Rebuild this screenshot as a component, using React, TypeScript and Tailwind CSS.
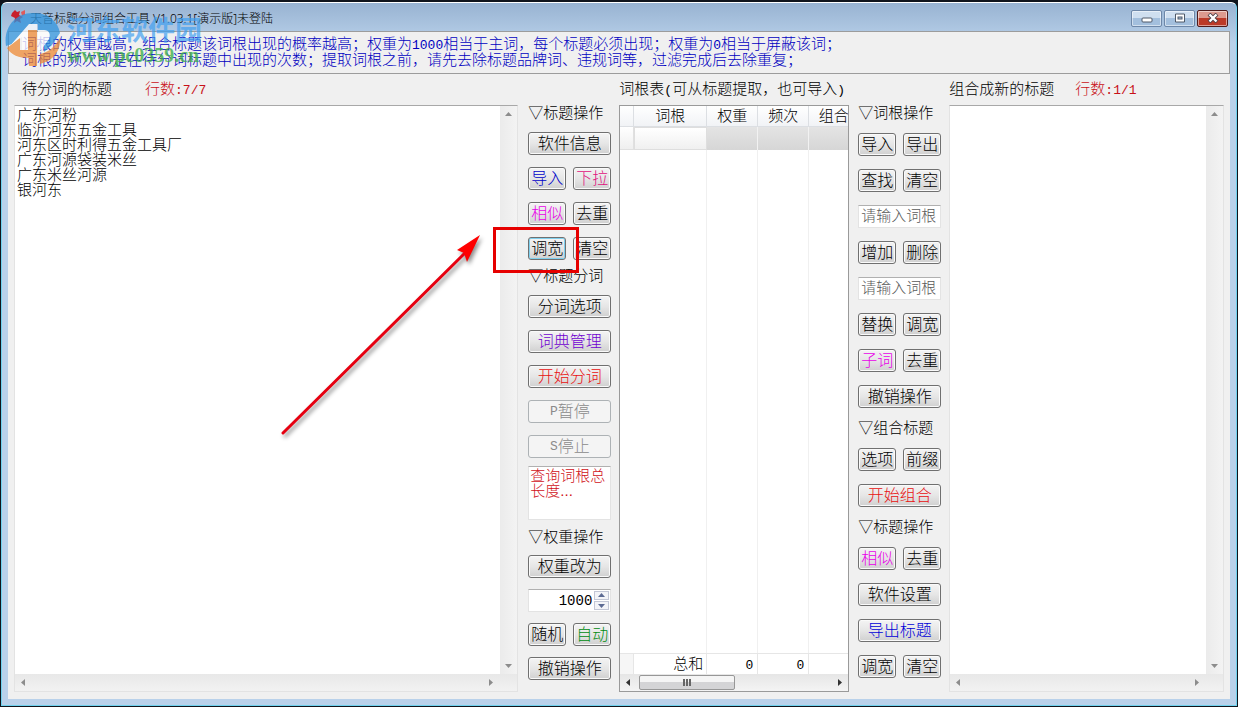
import { ReactNode } from "react";

const font = "font-['Liberation_Sans','Noto_Sans_CJK_SC',sans-serif] font-light";

function Num({ children }: { children: ReactNode }) {
  return <span className="font-['Liberation_Mono',monospace] text-[13px] leading-none">{children}</span>;
}

function Btn({ children, className = "text-black", disabled = false }: { children: ReactNode; className?: string; disabled?: boolean }) {
  return (
    <button
      type="button"
      disabled={disabled}
      className={`flex h-[23px] w-full items-center justify-center overflow-hidden rounded-[3px] border text-base leading-none whitespace-nowrap ${
        disabled
          ? "border-[#adb2b5] bg-[#f4f4f4] text-[#8a8a8a]"
          : `border-[#707070] bg-linear-to-b from-[#f4f4f4] from-0% via-[#e6e6e6] via-50% to-[#d0d0d0] shadow-[inset_0_0_0_1px_#fafafa] ${className}`
      }`}
    >
      {children}
    </button>
  );
}

function Pair({ children }: { children: ReactNode }) {
  return <div className="grid grid-cols-2 gap-[7px]">{children}</div>;
}

function Label({ children }: { children: ReactNode }) {
  return <h2 className="h-[15px] text-[15px] leading-[15px] whitespace-nowrap">▽{children}</h2>;
}

function Arrow({ dir, className = "text-[#8c8c8c]" }: { dir: "up" | "down" | "left" | "right"; className?: string }) {
  const d = {
    up: "M1 6L4.500 2L8 6Z",
    down: "M1 3L4.500 7L8 3Z",
    left: "M6 1L2 4.500L6 8Z",
    right: "M3 1L7 4.500L3 8Z",
  }[dir];
  return (
    <svg viewBox="0 0 9 9" className={`size-[9px] shrink-0 ${className}`} aria-hidden="true">
      <path d={d} fill="currentColor" />
    </svg>
  );
}

function ListPanel({ label, value }: { label: string; value: string }) {
  return (
    <div className="flex min-h-0 flex-1 flex-col border border-[#e3e3e3] border-t-[#a8a8a8] bg-[#f0f0f0]">
      <div className="flex min-h-0 flex-1">
        <textarea
          aria-label={label}
          defaultValue={value}
          spellCheck={false}
          className="min-w-0 flex-1 resize-none overflow-hidden bg-white px-0.5 pt-px text-[15px] leading-[15px] outline-none"
        />
        <div className="flex w-[17px] flex-col items-center justify-between bg-linear-to-r from-[#ebebeb] to-[#f3f3f3] py-1">
          <Arrow dir="up" />
          <Arrow dir="down" />
        </div>
      </div>
      <div className="flex h-[17px] items-center justify-between bg-linear-to-b from-[#e8e8e8] to-[#f2f2f2] pr-[22px] pl-1">
        <Arrow dir="left" />
        <Arrow dir="right" />
      </div>
    </div>
  );
}

function TitleBar() {
  const box = "flex h-[17px] w-[31px] items-center justify-center rounded-[2px] border shadow-[inset_0_0_0_1px_rgba(255,255,255,0.5)]";
  return (
    <header className="flex h-7 shrink-0 items-center pr-[2px] pl-[3px]">
      <svg viewBox="0 0 16 16" className="size-4" aria-hidden="true">
        <path d="M1 4L4 1L6 3L9 2L8 6L12 8L9 10L10 14L6 12L3 14L4 9L0 7Z" fill="#c9202c" />
        <path d="M10 3L14 1V6L11 7Z" fill="#e05a5a" />
      </svg>
      <h1 className="ml-[3px] flex-1 pt-1 font-['Noto_Sans','Noto_Sans_CJK_SC',sans-serif] text-xs leading-4 text-black">
        天音标题分词组合工具 V1.03.1[演示版]未登陆
      </h1>
      <div className="flex gap-[2px] pt-[2px]">
        <button type="button" aria-label="最小化" className={`${box} border-[#6d87a8] bg-linear-to-b from-[#cfdff0] from-45% to-[#a3bfdd] to-50%`}>
          <svg viewBox="0 0 12 10" className="h-[10px] w-3"><rect x="1" y="5" width="10" height="4" rx="1" fill="#fff" stroke="#4e5968" /></svg>
        </button>
        <button type="button" aria-label="最大化" className={`${box} border-[#6d87a8] bg-linear-to-b from-[#cfdff0] from-45% to-[#a3bfdd] to-50%`}>
          <svg viewBox="0 0 12 10" className="h-[10px] w-3"><path d="M1.500 1h9v8h-9Z" fill="#fff" stroke="#4e5968" /><rect x="4" y="4" width="4" height="2" fill="#a9c2dd" stroke="#4e5968" /></svg>
        </button>
        <button type="button" aria-label="关闭" className={`${box} border-[#4f1b1b] bg-linear-to-b from-[#dd9a8f] from-45% to-[#bb3a28] to-50%`}>
          <svg viewBox="0 0 12 10" className="h-[10px] w-3"><path d="M2 1L10 9M10 1L2 9" stroke="#4e4048" strokeWidth="4" /><path d="M2.500 1.500L9.500 8.500M9.500 1.500L2.500 8.500" stroke="#fff" strokeWidth="2.400" /></svg>
        </button>
      </div>
    </header>
  );
}

function RootTable() {
  const line = "border-r border-[#e6e6e6]";
  return (
    <div className="flex min-h-0 flex-1 flex-col overflow-hidden border border-[#9a9a9a] bg-white">
      <div className="flex min-h-0 flex-1 overflow-hidden">
        <table className="h-full w-[239px] shrink-0 table-fixed border-separate border-spacing-0 text-[15px] leading-[15px]">
          <colgroup>
            <col className="w-[14px]" />
            <col className="w-[73px]" />
            <col className="w-[51px]" />
            <col className="w-[51px]" />
            <col className="w-[50px]" />
          </colgroup>
          <thead>
            <tr className="h-[21px]">
              {["", "词根", "权重", "频次", "组合"].map((h, i) => (
                <th key={i} className="border-r border-b border-[#dcdfe3] bg-linear-to-b from-white to-[#f1f3f6] p-0 pb-0.5 font-light whitespace-nowrap">
                  {h}
                </th>
              ))}
            </tr>
          </thead>
          <tbody>
            <tr className="h-[23px]">
              <td className="border-r border-b border-[#e0e0e0] bg-linear-to-b from-white to-[#efefef] p-0" />
              <td className="border border-[#dedede] bg-linear-to-b from-white to-[#f0f0f0] p-0" />
              <td className="border-r border-[#f2f2f2] bg-linear-to-b from-[#e4e4e4] to-[#d6d6d6] p-0" />
              <td className="border-r border-[#f2f2f2] bg-linear-to-b from-[#e4e4e4] to-[#d6d6d6] p-0" />
              <td className="bg-linear-to-b from-[#e4e4e4] to-[#d6d6d6] p-0" />
            </tr>
            <tr>
              <td className="p-0" />
              {[0, 1, 2].map((i) => <td key={i} className="border-r border-[#f0f0f0] p-0" />)}
              <td className="p-0" />
            </tr>
          </tbody>
          <tfoot>
            <tr className="h-[21px] text-right">
              <td className={`border-t ${line} bg-[#f6f6f6] p-0`} />
              <td className={`border-t ${line} p-0 pr-[3px] pb-0.5`}>总和</td>
              <td className={`border-t ${line} p-0 pr-1`}><Num>0</Num></td>
              <td className={`border-t ${line} p-0 pr-1`}><Num>0</Num></td>
              <td className="border-t border-[#e6e6e6] p-0" />
            </tr>
          </tfoot>
        </table>
      </div>
      <div className="flex h-[17px] shrink-0 items-center bg-linear-to-b from-[#e6e6e6] to-[#f4f4f4] px-1">
        <Arrow dir="left" className="text-[#333]" />
        <div className="ml-[6px] flex h-[15px] w-24 items-center justify-center gap-px rounded-[2px] border border-[#979797] bg-linear-to-b from-[#f5f5f5] from-45% to-[#d4d4d6] to-50%">
          <i className="h-[7px] w-0.5 bg-[#666]" />
          <i className="h-[7px] w-0.5 bg-[#666]" />
          <i className="h-[7px] w-0.5 bg-[#666]" />
        </div>
        <span className="flex-1" />
        <Arrow dir="right" className="text-[#333]" />
      </div>
    </div>
  );
}

function TitleTools() {
  return (
    <div className="ml-[10px] flex w-[83px] shrink-0 flex-col pt-[31px]">
      <section className="flex flex-col gap-3">
        <Label>标题操作</Label>
        <Btn>软件信息</Btn>
        <Pair><Btn className="text-[#0000c8]">导入</Btn><Btn className="text-[#e0107c]">下拉</Btn></Pair>
        <Pair><Btn className="text-[#e800e8]">相似</Btn><Btn>去重</Btn></Pair>
        <Pair>
          <Btn className="border-[#2c8fb8] text-black ring-1 ring-[#7fd0ee] ring-inset">调宽</Btn>
          <Btn>清空</Btn>
        </Pair>
      </section>
      <section className="mt-2 flex flex-col gap-3">
        <Label>标题分词</Label>
        <Btn>分词选项</Btn>
        <Btn className="text-[#7000d0]">词典管理</Btn>
        <Btn className="text-[#e81010]">开始分词</Btn>
        <Btn disabled><Num>P</Num>暂停</Btn>
        <Btn disabled><Num>S</Num>停止</Btn>
      </section>
      <textarea
        aria-label="查询词根总长度"
        defaultValue="查询词根总长度..."
        className="mt-2 h-[54px] resize-none overflow-hidden border border-[#e3e3e3] border-t-[#b0b0b0] bg-white px-px pt-px text-[15px] leading-[15px] text-[#d01018] outline-none"
      />
      <section className="mt-[9px] flex flex-col gap-[11px]">
        <Label>权重操作</Label>
        <Btn>权重改为</Btn>
        <div className="flex h-[23px] items-center border border-[#e3e3e3] border-t-[#b0b0b0] bg-white pr-px">
          <input aria-label="权重" defaultValue="1000" className="w-0 flex-1 pr-0.5 text-right font-['Liberation_Mono',monospace] text-sm leading-none outline-none" />
          <div className="flex flex-col gap-px">
            <button type="button" aria-label="增大" className="flex h-[9px] w-[15px] items-center justify-center border border-[#c3c7d6] bg-[#f3f4f8]"><Arrow dir="up" className="text-[#5d6b94]" /></button>
            <button type="button" aria-label="减小" className="flex h-[9px] w-[15px] items-center justify-center border border-[#c3c7d6] bg-[#f3f4f8]"><Arrow dir="down" className="text-[#5d6b94]" /></button>
          </div>
        </div>
        <Pair><Btn>随机</Btn><Btn className="text-[#008c10]">自动</Btn></Pair>
        <Btn>撤销操作</Btn>
      </section>
    </div>
  );
}

function RootTools() {
  const field = "h-[23px] w-full border border-[#e3e3e3] border-t-[#b0b0b0] bg-white px-0.5 pb-0.5 text-[15px] leading-none text-[#666] outline-none placeholder:text-[#5a5a5a]";
  return (
    <div className="ml-[9px] flex w-[83px] shrink-0 flex-col gap-3 pt-[31px]">
      <section className="flex flex-col gap-[13px]">
        <Label>词根操作</Label>
        <Pair><Btn>导入</Btn><Btn>导出</Btn></Pair>
        <Pair><Btn>查找</Btn><Btn>清空</Btn></Pair>
        <input aria-label="查找词根" placeholder="请输入词根" className={field} />
        <Pair><Btn>增加</Btn><Btn>删除</Btn></Pair>
        <input aria-label="替换词根" placeholder="请输入词根" className={field} />
        <Pair><Btn>替换</Btn><Btn>调宽</Btn></Pair>
        <Pair><Btn className="text-[#e800e8]">子词</Btn><Btn>去重</Btn></Pair>
        <Btn>撤销操作</Btn>
      </section>
      <section className="flex flex-col gap-[13px]">
        <Label>组合标题</Label>
        <Pair><Btn>选项</Btn><Btn>前缀</Btn></Pair>
        <Btn className="text-[#e81010]">开始组合</Btn>
      </section>
      <section className="flex flex-col gap-[13px]">
        <Label>标题操作</Label>
        <Pair><Btn className="text-[#e800e8]">相似</Btn><Btn>去重</Btn></Pair>
        <Btn>软件设置</Btn>
        <Btn className="text-[#0000d8]">导出标题</Btn>
        <Pair><Btn>调宽</Btn><Btn>清空</Btn></Pair>
      </section>
    </div>
  );
}

function Watermark() {
  return (
    <div className="pointer-events-none absolute top-[10px] left-[4px] flex items-start gap-[5px]">
      <svg viewBox="4 10 58 60" className="h-[60px] w-[58px] opacity-75" aria-hidden="true">
        <path d="M6 46C3 26 17 12 34 13C48 13 58 21 60 33L52 45L44 52V30H38V24L30 26L12 44Z" fill="#2f93dc" />
        <path d="M9 47L29 24H37V30H29V50H22V37Z" fill="#fff" />
        <path d="M38 30H44C49 30 51 34 49 39L41 50H38Z" fill="#fff" />
        <path d="M7 48L20 38V50H28V30H37V66H29V58C19 58 11 55 7 48Z" fill="#ee8a34" />
        <path d="M40 54C50 52 55 46 60 38C61 52 52 61 40 64Z" fill="#ee8a34" />
      </svg>
      <div className="pt-[3px] whitespace-nowrap">
        <p className="font-['Noto_Sans_CJK_SC',sans-serif] text-[27px] leading-[32px] font-bold text-[#3f9ff0]/70">河东软件园</p>
        <p className="font-['Liberation_Serif',serif] text-xl leading-5 font-bold text-[#3fb04a]/80">www.pc0359.cn</p>
      </div>
    </div>
  );
}

export default function App() {
  return (
    <div className={`relative flex h-screen min-h-[700px] flex-col overflow-hidden bg-[#10141c] pt-[2px] pr-px pb-px pl-px text-black ${font}`}>
      <div className="flex min-h-0 flex-1 flex-col rounded-t-[6px] border border-[#6fd2ee] border-t-white bg-[#b9d1ea] bg-linear-to-b from-[#98b3d2] to-[#b9d1ea] to-[40px] px-[6px] pb-[6px]">
        <TitleBar />
        <main className="flex min-h-0 flex-1 flex-col bg-[#f0f0f0]">
          <div className="h-[43px] shrink-0 overflow-hidden border border-[#9c9c9c] pt-1 pl-[13px] text-[15px] leading-[15px] whitespace-nowrap text-[#0000c0]">
            <p>词根的权重越高，组合标题该词根出现的概率越高；权重为<Num>1000</Num>相当于主词，每个标题必须出现；权重为<Num>0</Num>相当于屏蔽该词；</p>
            <p>词根的频次即是在待分词标题中出现的次数；提取词根之前，请先去除标题品牌词、违规词等，过滤完成后去除重复；</p>
          </div>
          <div className="flex min-h-0 flex-1 px-[6px] pb-[7px]">
            <div className="flex min-w-0 flex-[503] flex-col">
              <div className="flex h-[31px] shrink-0 items-center gap-[33px] pb-0.5 pl-2 text-[15px] leading-[15px]">
                <h2>待分词的标题</h2>
                <span className="text-[#c81018]">行数<Num>:7/7</Num></span>
              </div>
              <ListPanel label="待分词的标题" value={"广东河粉\n临沂河东五金工具\n河东区时利得五金工具厂\n广东河源袋装米丝\n广东米丝河源\n银河东"} />
            </div>
            <TitleTools />
            <div className="ml-2 flex w-[230px] shrink-0 flex-col">
              <h2 className="h-[31px] shrink-0 pt-[7px] text-[15px] leading-[15px] whitespace-nowrap">词根表<Num>(</Num>可从标题提取，也可导入<Num>)</Num></h2>
              <RootTable />
            </div>
            <RootTools />
            <div className="ml-2 flex min-w-0 flex-[274] flex-col">
              <div className="flex h-[31px] shrink-0 items-center gap-[21px] pb-0.5 text-[15px] leading-[15px] whitespace-nowrap">
                <h2>组合成新的标题</h2>
                <span className="text-[#c81018]">行数<Num>:1/1</Num></span>
              </div>
              <ListPanel label="组合成新的标题" value="" />
            </div>
          </div>
        </main>
      </div>
      <Watermark />
      <div className="pointer-events-none absolute top-[227px] left-[493px] h-[46px] w-[86px] border-[3px] border-[#e60000]" />
      <svg viewBox="0 0 210 210" className="pointer-events-none absolute top-[230px] left-[277px] size-[210px] drop-shadow-[2px_3px_2px_rgba(0,0,0,0.45)]" aria-hidden="true">
        <path d="M6 203L190 21" stroke="#e60010" strokeWidth="3" strokeLinecap="round" />
        <path d="M203 5L180 20L187 23L190 32Z" fill="#f00" />
      </svg>
    </div>
  );
}
